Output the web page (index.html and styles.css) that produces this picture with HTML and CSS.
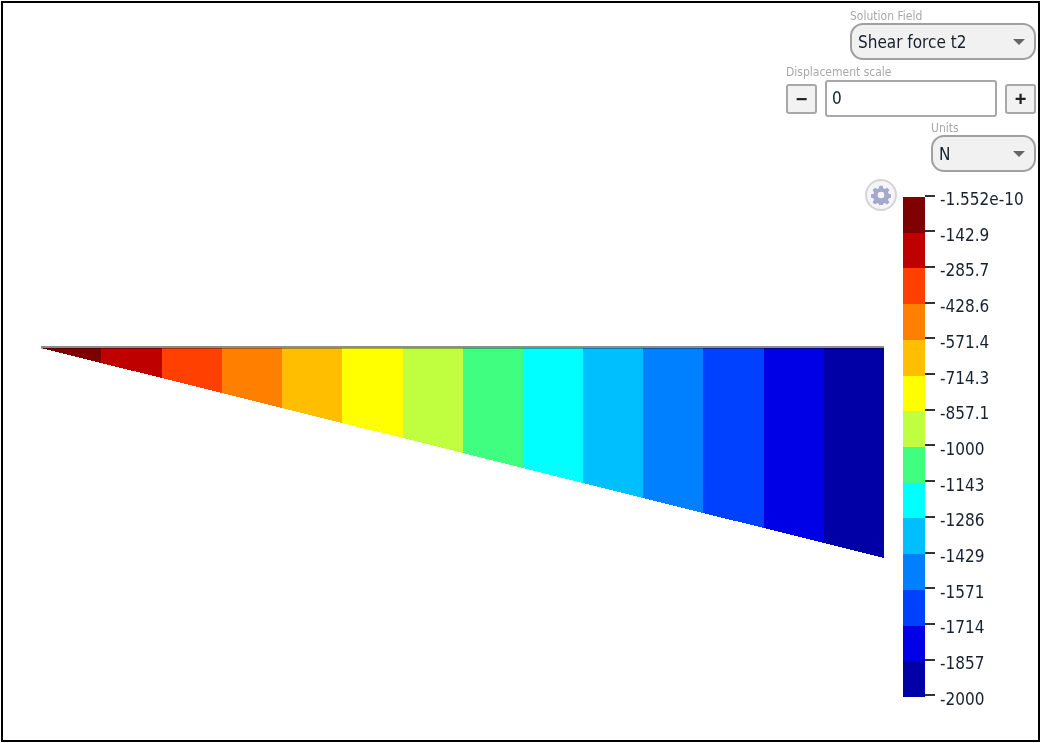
FILE: index.html
```html
<!DOCTYPE html>
<html lang="en">
<head>
<meta charset="utf-8">
<title>Shear force t2</title>
<link rel="stylesheet" href="styles.css">
</head>
<body>
<main class="frame">
  <section class="controls">
    <div class="field field-solution">
      <label class="caption">Solution Field</label>
      <div class="select"><span>Shear force t2</span><i class="caret"></i></div>
    </div>
    <div class="field field-scale">
      <label class="caption">Displacement scale</label>
      <div class="stepper">
        <button class="step">&#8722;</button>
        <div class="num">0</div>
        <button class="step">+</button>
      </div>
    </div>
    <div class="field field-units">
      <label class="caption">Units</label>
      <div class="select"><span>N</span><i class="caret"></i></div>
    </div>
  </section>
  <section class="stage">
    <svg class="plot" width="895" height="560" viewBox="0 0 895 560" shape-rendering="crispEdges">
      <g transform="translate(-3 -178)">
        <polygon fill="#7f0000" points="41,348 101,348 101,363"/>
        <polygon fill="#bf0000" points="101,348 162,348 162,378 101,363"/>
        <polygon fill="#ff4000" points="162,348 222,348 222,393 162,378"/>
        <polygon fill="#ff8000" points="222,348 282,348 282,408 222,393"/>
        <polygon fill="#ffbf00" points="282,348 342,348 342,423 282,408"/>
        <polygon fill="#ffff00" points="342,348 403,348 403,438 342,423"/>
        <polygon fill="#bfff40" points="403,348 463,348 463,453 403,438"/>
        <polygon fill="#40ff80" points="463,348 523,348 523,468 463,453"/>
        <polygon fill="#00ffff" points="523,348 583,348 583,483 523,468"/>
        <polygon fill="#00bfff" points="583,348 643,348 643,498 583,483"/>
        <polygon fill="#0080ff" points="643,348 703,348 703,513 643,498"/>
        <polygon fill="#0040ff" points="703,348 764,348 764,528 703,513"/>
        <polygon fill="#0000e6" points="764,348 824,348 824,543 764,528"/>
        <polygon fill="#0000a6" points="824,348 884,348 884,558 824,543"/>
        <rect x="41" y="346" width="843" height="2" fill="#8c8c8c"/>
        <rect x="41" y="348" width="843" height="1" fill="#000" fill-opacity="0.3"/>
      </g>
    </svg>
    <button class="gear" aria-label="Settings">
      <svg width="20" height="20" viewBox="0 0 24 24"><path fill="#a4a8cc" fill-rule="evenodd" d="M10 1h4l.6 3 2.1.9 2.6-1.7 2.8 2.8-1.7 2.6.9 2.1 3 .6v4l-3 .6-.9 2.1 1.7 2.6-2.8 2.8-2.6-1.7-2.1.9-.6 3h-4l-.6-3-2.1-.9-2.6 1.7-2.8-2.8 1.7-2.6-.9-2.1-3-.6v-4l3-.6.9-2.1-1.7-2.6 2.8-2.8 2.6 1.7 2.1-.9zM12 8a4 4 0 1 0 0 8 4 4 0 0 0 0-8z"/></svg>
    </button>
    <div class="legend">
      <div class="bar">
        <i class="b1"></i><i class="b2"></i><i class="b3"></i><i class="b4"></i><i class="b5"></i><i class="b6"></i><i class="b7"></i><i class="b8"></i><i class="b9"></i><i class="b10"></i><i class="b11"></i><i class="b12"></i><i class="b13"></i><i class="b14"></i>
      </div>
      <ul class="scale">
        <li>-1.552e-10</li><li>-142.9</li><li>-285.7</li><li>-428.6</li><li>-571.4</li><li>-714.3</li><li>-857.1</li><li>-1000</li><li>-1143</li><li>-1286</li><li>-1429</li><li>-1571</li><li>-1714</li><li>-1857</li><li>-2000</li>
      </ul>
    </div>
  </section>
</main>
</body>
</html>
```

FILE: styles.css
```css
* { box-sizing: border-box; }
html, body { margin: 0; padding: 0; background: #fff; }
body { width: 1042px; height: 743px; font-family: "DejaVu Sans Condensed", "DejaVu Sans", sans-serif; color: #222; overflow: hidden; }

.frame {
  margin: 1px 0 0 1px;
  width: 1039px;
  height: 741px;
  border: 2px solid #000;
  display: flex;
  flex-direction: column;
  background: #fff;
}

/* Top-right controls */
.controls {
  height: 175px;
  display: flex;
  flex-direction: column;
  align-items: flex-end;
  padding: 7px 2px 0 0;
  filter: blur(0.4px);
}
.field { display: flex; flex-direction: column; }
.field-solution { width: 186px; }
.field-scale { width: 250px; margin-top: 6px; }
.field-units { width: 105px; margin-top: 5px; }
.caption {
  font: 12px/13px "DejaVu Sans Condensed", "Liberation Sans", sans-serif;
  color: #a8a8a8;
  height: 13px;
}
.select {
  height: 37px;
  border: 2px solid #a0a0a0;
  border-radius: 13px;
  background: #f1f1f1;
  display: flex;
  align-items: center;
  justify-content: space-between;
  padding: 0 9px 0 6px;
  font: 17px "DejaVu Sans Condensed", sans-serif;
  color: #16202e;
}
.caret {
  width: 0;
  height: 0;
  border-left: 6px solid transparent;
  border-right: 6px solid transparent;
  border-top: 6px solid #666;
}
.stepper { display: flex; align-items: center; justify-content: space-between; height: 37px; margin-top: 1px; }
.step {
  width: 31px;
  height: 30px;
  padding: 0;
  border: 2px solid #a8a8a8;
  border-radius: 3px;
  background: #f2f2f2;
  font: bold 20px/1 "Liberation Sans", sans-serif;
  color: #222;
}
.num {
  width: 172px;
  height: 37px;
  margin: 0 8px;
  border: 2px solid #a8a8a8;
  border-radius: 3px;
  background: #fff;
  padding: 0 5px;
  font: 17px/33px "DejaVu Sans Condensed", sans-serif;
  color: #16202e;
}

/* Plot and legend */
.stage { position: relative; flex: 1; display: flex; }
.plot { display: block; width: 895px; height: 560px; flex: none; filter: blur(0.4px); }
.gear {
  position: absolute;
  left: 862px;
  top: 1px;
  width: 32px;
  height: 32px;
  padding: 0;
  border-radius: 50%;
  border: 2px solid #d4d4da;
  background: #f5f5f7;
  display: flex;
  align-items: center;
  justify-content: center;
  filter: blur(0.4px);
}
.legend { display: flex; margin-left: 5px; height: 520px; margin-top: 9px; filter: blur(0.4px); }
.bar { width: 22px; height: 500px; margin-top: 10px; display: flex; flex-direction: column; }
.bar i { display: block; flex: 1; }
.b1 { background: #7f0000; }
.b2 { background: #bf0000; }
.b3 { background: #ff4000; }
.b4 { background: #ff8000; }
.b5 { background: #ffbf00; }
.b6 { background: #ffff00; }
.b7 { background: #bfff40; }
.b8 { background: #40ff80; }
.b9 { background: #00ffff; }
.b10 { background: #00bfff; }
.b11 { background: #0080ff; }
.b12 { background: #0040ff; }
.b13 { background: #0000e6; }
.b14 { background: #0000a6; }
.scale {
  list-style: none;
  margin: 2px 0 0;
  padding: 0;
  height: 520px;
  display: flex;
  flex-direction: column;
  justify-content: space-between;
  font: 17px/20px "DejaVu Sans Condensed", sans-serif;
  color: #16202e;
}
.scale li { height: 20px; display: flex; align-items: center; white-space: nowrap; }
.scale li::before {
  content: "";
  width: 10px;
  height: 2px;
  background: #333;
  margin-right: 5px;
  margin-top: -7px;
}
```
